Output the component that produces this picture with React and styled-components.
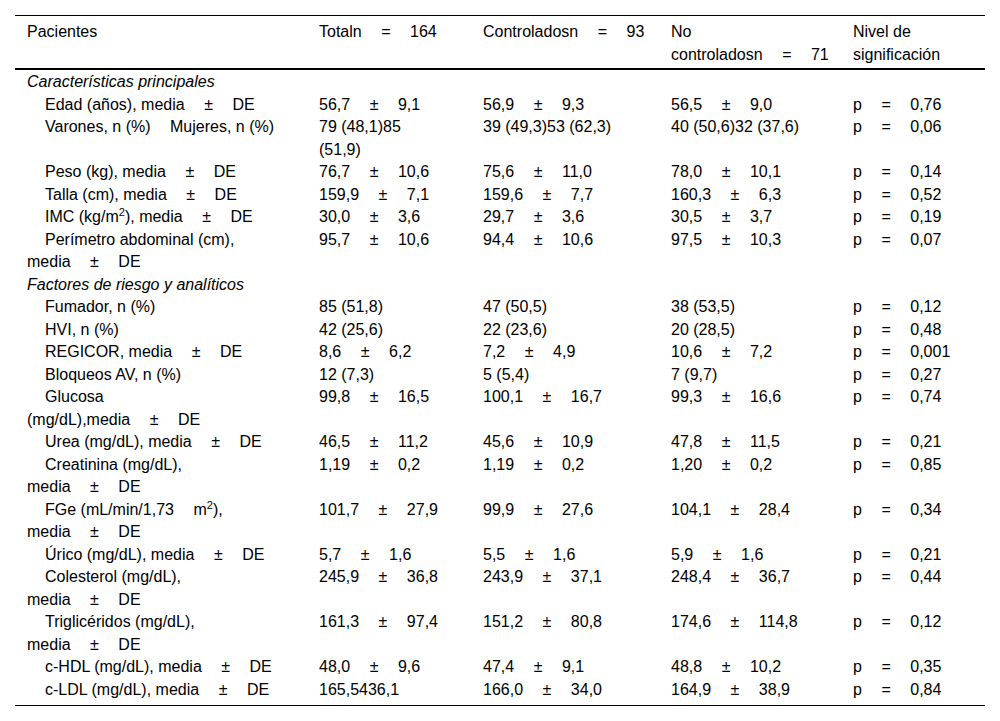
import React from 'react';
import styled, { createGlobalStyle, css } from 'styled-components';

const Global = createGlobalStyle`
  html, body { margin: 0; padding: 0; background: #fff; }
  body { font-family: "Liberation Sans", Arial, Helvetica, sans-serif; color: #000; }
`;

const Page = styled.div`
  padding: 15px 15px 0;
`;

const Table = styled.table`
  width: 970px;
  table-layout: fixed;
  border-collapse: separate;
  border-spacing: 0;
  font-size: 16px;
  line-height: 22.5px;
`;

const colPadding = css`
  padding-left: 12px;
  &:nth-child(1) { padding-right: 30px; }
  &:nth-child(2) { padding-right: 29px; }
  &:nth-child(3) { padding-right: 12px; }
  &:nth-child(4) { padding-right: 4px; }
  &:nth-child(5) { padding-right: 12px; }
`;

const Th = styled.th`
  font-weight: normal;
  text-align: left;
  vertical-align: top;
  padding-top: 5px;
  padding-bottom: 2px;
  border-top: 1px solid #000;
  border-bottom: 2px solid #000;
  ${colPadding}
`;

const Tr = styled.tr`
  ${(p) =>
    p.$last &&
    css`
      & > td {
        padding-bottom: 4px;
        border-bottom: 1px solid #000;
      }
    `}
`;

const Td = styled.td`
  vertical-align: top;
  text-align: left;
  padding-top: 0;
  padding-bottom: 0;
  ${colPadding}
  text-indent: ${(p) => (p.$indent ? '18px' : '0')};
`;

const SectionCell = styled.td`
  font-style: italic;
  padding: ${(p) => (p.$first ? '1px' : '0')} 12px 0;
  text-align: left;
`;

const Op = styled.span`
  margin: 0 19.5px;
`;

const Keep = styled.span`
  white-space: nowrap;
`;

const Wide = styled.span`
  margin-left: 19.5px;
`;

const Sup = styled.sup`
  font-size: 11px;
  line-height: 0;
  vertical-align: 6px;
`;

const pm = (a, b) => (
  <>
    <span>{a}</span>
    <Op>±</Op>
    <span>{b}</span>
  </>
);

const md = (
  <Keep>
    media<Op>±</Op>DE
  </Keep>
);

const rows = [
  { section: 'Características principales' },
  { label: <>Edad (años), {md}</>, t: pm('56,7', '9,1'), c: pm('56,9', '9,3'), n: pm('56,5', '9,0'), p: '0,76' },
  {
    label: (
      <>
        Varones, n (%)<Wide>Mujeres, n (%)</Wide>
      </>
    ),
    t: '79 (48,1)85 (51,9)',
    c: '39 (49,3)53 (62,3)',
    n: '40 (50,6)32 (37,6)',
    p: '0,06',
  },
  { label: <>Peso (kg), {md}</>, t: pm('76,7', '10,6'), c: pm('75,6', '11,0'), n: pm('78,0', '10,1'), p: '0,14' },
  { label: <>Talla (cm), {md}</>, t: pm('159,9', '7,1'), c: pm('159,6', '7,7'), n: pm('160,3', '6,3'), p: '0,52' },
  {
    label: (
      <>
        IMC (kg/m<Sup>2</Sup>), {md}
      </>
    ),
    t: pm('30,0', '3,6'),
    c: pm('29,7', '3,6'),
    n: pm('30,5', '3,7'),
    p: '0,19',
  },
  { label: <>Perímetro abdominal (cm), {md}</>, t: pm('95,7', '10,6'), c: pm('94,4', '10,6'), n: pm('97,5', '10,3'), p: '0,07' },
  { section: 'Factores de riesgo y analíticos' },
  { label: 'Fumador, n (%)', t: '85 (51,8)', c: '47 (50,5)', n: '38 (53,5)', p: '0,12' },
  { label: 'HVI, n (%)', t: '42 (25,6)', c: '22 (23,6)', n: '20 (28,5)', p: '0,48' },
  { label: <>REGICOR, {md}</>, t: pm('8,6', '6,2'), c: pm('7,2', '4,9'), n: pm('10,6', '7,2'), p: '0,001' },
  { label: 'Bloqueos AV, n (%)', t: '12 (7,3)', c: '5 (5,4)', n: '7 (9,7)', p: '0,27' },
  {
    label: (
      <>
        Glucosa <Keep>(mg/dL),{md}</Keep>
      </>
    ),
    t: pm('99,8', '16,5'),
    c: pm('100,1', '16,7'),
    n: pm('99,3', '16,6'),
    p: '0,74',
  },
  { label: <>Urea (mg/dL), {md}</>, t: pm('46,5', '11,2'), c: pm('45,6', '10,9'), n: pm('47,8', '11,5'), p: '0,21' },
  { label: <>Creatinina (mg/dL), {md}</>, t: pm('1,19', '0,2'), c: pm('1,19', '0,2'), n: pm('1,20', '0,2'), p: '0,85' },
  {
    label: (
      <>
        FGe (mL/min/1,73
        <Wide>
          m<Sup>2</Sup>),
        </Wide>{' '}
        {md}
      </>
    ),
    t: pm('101,7', '27,9'),
    c: pm('99,9', '27,6'),
    n: pm('104,1', '28,4'),
    p: '0,34',
  },
  { label: <>Úrico (mg/dL), {md}</>, t: pm('5,7', '1,6'), c: pm('5,5', '1,6'), n: pm('5,9', '1,6'), p: '0,21' },
  { label: <>Colesterol (mg/dL), {md}</>, t: pm('245,9', '36,8'), c: pm('243,9', '37,1'), n: pm('248,4', '36,7'), p: '0,44' },
  { label: <>Triglicéridos (mg/dL), {md}</>, t: pm('161,3', '97,4'), c: pm('151,2', '80,8'), n: pm('174,6', '114,8'), p: '0,12' },
  { label: <>c-HDL (mg/dL), {md}</>, t: pm('48,0', '9,6'), c: pm('47,4', '9,1'), n: pm('48,8', '10,2'), p: '0,35' },
  { label: <>c-LDL (mg/dL), {md}</>, t: '165,5436,1', c: pm('166,0', '34,0'), n: pm('164,9', '38,9'), p: '0,84' },
];

export default function App() {
  return (
    <Page>
      <Global />
      <Table>
        <colgroup>
          <col style={{ width: 292 }} />
          <col style={{ width: 164 }} />
          <col style={{ width: 188 }} />
          <col style={{ width: 182 }} />
          <col style={{ width: 144 }} />
        </colgroup>
        <thead>
          <tr>
            <Th>Pacientes</Th>
            <Th>
              Totaln<Op>=</Op>164
            </Th>
            <Th>
              Controladosn<Op>=</Op>93
            </Th>
            <Th>
              No <Keep>controladosn<Op>=</Op>71</Keep>
            </Th>
            <Th>Nivel de significación</Th>
          </tr>
        </thead>
        <tbody>
          {rows.map((r, i) =>
            r.section ? (
              <tr key={i}>
                <SectionCell colSpan={5} $first={i === 0}>
                  {r.section}
                </SectionCell>
              </tr>
            ) : (
              <Tr key={i} $last={i === rows.length - 1}>
                <Td $indent>{r.label}</Td>
                <Td>{r.t}</Td>
                <Td>{r.c}</Td>
                <Td>{r.n}</Td>
                <Td>
                  p<Op>=</Op>
                  {r.p}
                </Td>
              </Tr>
            )
          )}
        </tbody>
      </Table>
    </Page>
  );
}
